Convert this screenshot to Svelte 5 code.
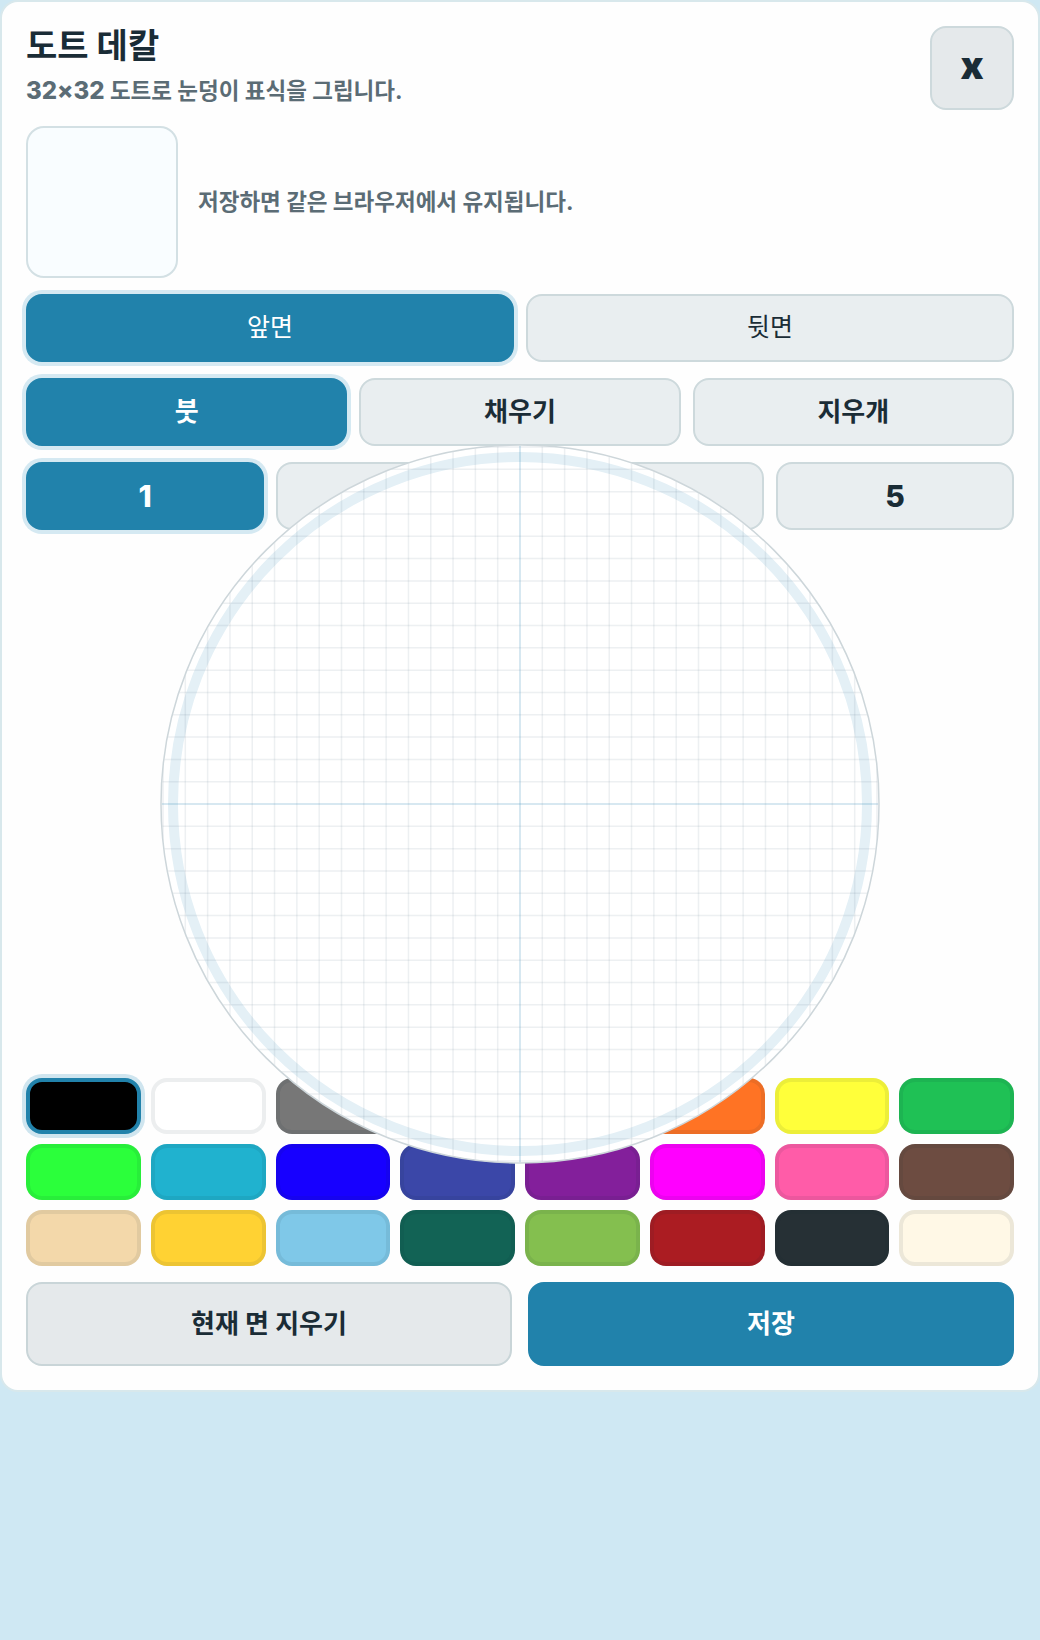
<script>
  const swatches = [
    '#000000', '#ffffff', '#777777', '#e53935', '#9c27b0', '#ff7324', '#ffff3a', '#1fc155',
    '#2bff3b', '#20b2cf', '#1700ff', '#3b47a8', '#831f9b', '#ff00ff', '#ff5ca8', '#6d4c41',
    '#f3d8aa', '#ffd233', '#7fc8e8', '#126355', '#84bf4f', '#ab1c22', '#263035', '#fff8e6'
  ];
  const cell = 714 / 32;
  const lines = Array.from({ length: 33 }, (_, i) => ({ pos: 3 + i * cell, mid: i === 16 }));
</script>

<main class="panel">
  <header class="head">
    <div class="titles">
      <h1>도트 데칼</h1>
      <p><span class="dim">32×32</span> 도트로 눈덩이 표식을 그립니다.</p>
    </div>
    <button class="btn close">x</button>
  </header>

  <section class="info">
    <div class="preview"></div>
    <p>저장하면 같은 브라우저에서 유지됩니다.</p>
  </section>

  <div class="row two">
    <button class="btn light on">앞면</button>
    <button class="btn light">뒷면</button>
  </div>
  <div class="row three">
    <button class="btn on">붓</button>
    <button class="btn">채우기</button>
    <button class="btn">지우개</button>
  </div>
  <div class="row sizes">
    <button class="btn num on">1</button>
    <button class="btn num">3</button>
    <button class="btn num">5</button>
  </div>

  <div class="stage">
    <svg class="dial" viewBox="0 0 720 720" width="720" height="720" aria-label="도트 캔버스">
      <defs>
        <clipPath id="disc"><circle cx="360" cy="360" r="358.5" /></clipPath>
      </defs>
      <circle cx="360" cy="360" r="359" fill="#ffffff" />
      <g class="soft" clip-path="url(#disc)">
        <circle class="ring" cx="360" cy="360" r="347" />
        {#each lines as l}
          <line x1={l.pos} x2={l.pos} y1="0" y2="720" class:mid={l.mid} />
          <line y1={l.pos} y2={l.pos} x1="0" x2="720" class:mid={l.mid} />
        {/each}
      </g>
      <circle class="rim" cx="360" cy="360" r="359" />
    </svg>
  </div>

  <div class="palette">
    {#each swatches as c, i}
      <button class="swatch" class:picked={i === 0} style:background-color={c} aria-label={c}></button>
    {/each}
  </div>

  <div class="row actions">
    <button class="btn big">현재 면 지우기</button>
    <button class="btn big save">저장</button>
  </div>
</main>

<style>
  :global(body) {
    margin: 0;
    background: #cfe8f3;
  }
  .panel {
    box-sizing: border-box;
    width: 1040px;
    height: 1392px;
    padding: 24px;
    display: flex;
    flex-direction: column;
    gap: 16px;
    background: #fefefe;
    border: 2px solid #d8e8ec;
    border-radius: 18px;
    font-family: Inter, "Noto Sans CJK KR", sans-serif;
    color: #1a2c36;
  }
  .head {
    display: flex;
    justify-content: space-between;
    align-items: flex-start;
  }
  h1 {
    margin: 0;
    font-size: 34px;
    line-height: 40px;
    font-weight: 700;
  }
  .titles p {
    margin: 10px 0 0;
    font-size: 22.5px;
    line-height: 30px;
    font-weight: 700;
    color: #5b6c75;
  }
  .dim {
    font-size: 24px;
    font-weight: 800;
  }
  .btn {
    box-sizing: border-box;
    border: 2px solid #cdd9dc;
    border-radius: 16px;
    background: #e9eef0;
    color: #1a2c36;
    font: 700 26px/1 Inter, "Noto Sans CJK KR", sans-serif;
    padding: 0;
  }
  .btn.light {
    font-weight: 400;
    font-size: 25px;
    padding-bottom: 2px;
  }
  .btn.num {
    font-size: 30px;
    font-weight: 800;
  }
  .btn.on {
    background: #2182ab;
    border-color: #2182ab;
    color: #ffffff;
    box-shadow: 0 0 0 4px #d5e9f2;
  }
  .close {
    width: 84px;
    height: 84px;
    padding-bottom: 6px;
    background: #e5e9eb;
    font-size: 38px;
    font-weight: 900;
  }
  .info {
    display: flex;
    align-items: center;
    gap: 20px;
  }
  .info p {
    margin: 0;
    padding-bottom: 5px;
    font-size: 22.5px;
    font-weight: 700;
    color: #5b6c75;
  }
  .preview {
    box-sizing: border-box;
    width: 152px;
    height: 152px;
    background: #f9fdff;
    border: 2px solid #d3e0e4;
    border-radius: 18px;
  }
  .row {
    display: grid;
    gap: 12px;
    height: 68px;
  }
  .two { grid-template-columns: 1fr 1fr; }
  .three { grid-template-columns: 1fr 1fr 1fr; }
  .sizes { grid-template-columns: 238px 1fr 238px; }
  .stage {
    position: relative;
    height: 516px;
  }
  .dial {
    position: absolute;
    left: 134px;
    top: -102px;
    z-index: 1;
    display: block;
  }
  .soft {
    filter: blur(0.5px);
  }
  .dial line {
    stroke: rgba(90, 120, 135, 0.11);
    stroke-width: 1.5;
  }
  .dial line.mid {
    stroke: rgba(50, 135, 180, 0.26);
  }
  .ring {
    fill: none;
    stroke: #e4f0f6;
    stroke-width: 10;
  }
  .rim {
    fill: none;
    stroke: #cdd6da;
    stroke-width: 1.5;
  }
  .palette {
    display: grid;
    grid-template-columns: repeat(8, 1fr);
    grid-auto-rows: 56px;
    gap: 10px;
  }
  .swatch {
    box-sizing: border-box;
    padding: 0;
    border: 4px solid rgba(18, 38, 48, 0.08);
    border-radius: 16px;
    background-clip: border-box;
  }
  .swatch.picked {
    border-color: #2182ab;
    box-shadow: 0 0 0 4px #cfe5ef;
  }
  .actions {
    grid-template-columns: 1fr 1fr;
    gap: 16px;
    height: 84px;
  }
  .big {
    background: #e5e9eb;
    border-color: #c9d5d8;
  }
  .save {
    background: #2182ab;
    border-color: #2182ab;
    color: #ffffff;
  }
</style>
